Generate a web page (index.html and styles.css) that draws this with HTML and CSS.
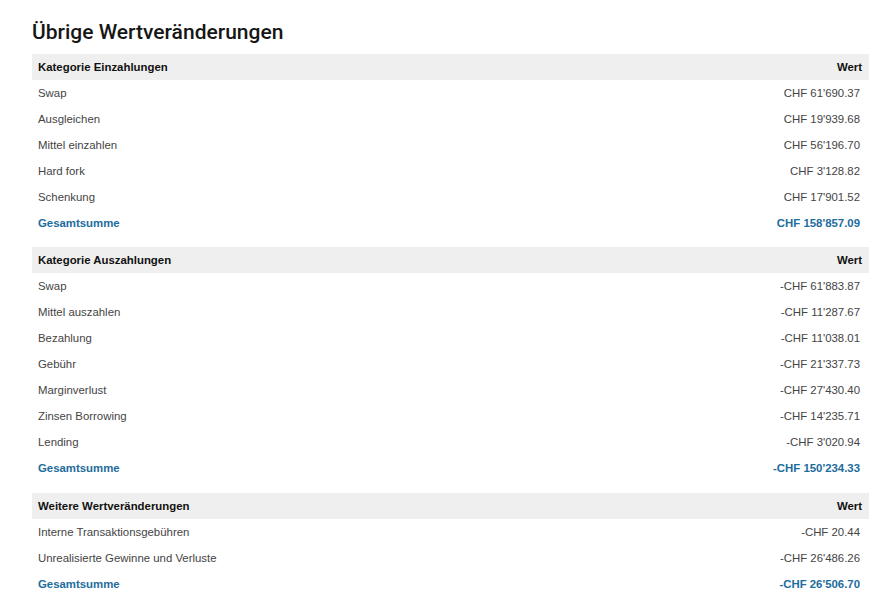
FILE: index.html
```html
<!DOCTYPE html>
<html lang="de">
<head>
    <meta charset="UTF-8">
    <meta name="viewport" content="width=device-width, initial-scale=1.0">
    <title>Übrige Wertveränderungen</title>
    <link rel="stylesheet" href="styles.css">
</head>
<body>

    <h1 class="title">Übrige Wertveränderungen</h1>

    <!-- Einzahlungen -->
    <table class="report">
        <thead>
            <tr><th>Kategorie Einzahlungen</th><th class="num">Wert</th></tr>
        </thead>
        <tbody>
            <tr><td>Swap</td><td class="num">CHF 61'690.37</td></tr>
            <tr><td>Ausgleichen</td><td class="num">CHF 19'939.68</td></tr>
            <tr><td>Mittel einzahlen</td><td class="num">CHF 56'196.70</td></tr>
            <tr><td>Hard fork</td><td class="num">CHF 3'128.82</td></tr>
            <tr><td>Schenkung</td><td class="num">CHF 17'901.52</td></tr>
            <tr class="total"><td>Gesamtsumme</td><td class="num">CHF 158'857.09</td></tr>
        </tbody>
    </table>

    <!-- Auszahlungen -->
    <table class="report">
        <thead>
            <tr><th>Kategorie Auszahlungen</th><th class="num">Wert</th></tr>
        </thead>
        <tbody>
            <tr><td>Swap</td><td class="num">-CHF 61'883.87</td></tr>
            <tr><td>Mittel auszahlen</td><td class="num">-CHF 11'287.67</td></tr>
            <tr><td>Bezahlung</td><td class="num">-CHF 11'038.01</td></tr>
            <tr><td>Gebühr</td><td class="num">-CHF 21'337.73</td></tr>
            <tr><td>Marginverlust</td><td class="num">-CHF 27'430.40</td></tr>
            <tr><td>Zinsen Borrowing</td><td class="num">-CHF 14'235.71</td></tr>
            <tr><td>Lending</td><td class="num">-CHF 3'020.94</td></tr>
            <tr class="total"><td>Gesamtsumme</td><td class="num">-CHF 150'234.33</td></tr>
        </tbody>
    </table>

    <!-- Weitere -->
    <table class="report">
        <thead>
            <tr><th>Weitere Wertveränderungen</th><th class="num">Wert</th></tr>
        </thead>
        <tbody>
            <tr><td>Interne Transaktionsgebühren</td><td class="num">-CHF 20.44</td></tr>
            <tr><td>Unrealisierte Gewinne und Verluste</td><td class="num">-CHF 26'486.26</td></tr>
            <tr class="total"><td>Gesamtsumme</td><td class="num">-CHF 26'506.70</td></tr>
        </tbody>
    </table>

</body>
</html>
```

FILE: styles.css
```css
* {
    margin: 0;
    padding: 0;
    box-sizing: border-box;
}

body {
    font-family: 'Liberation Sans', Arial, sans-serif;
    background-color: #fff;
    color: #444;
    padding: 18px 14px 0 32px;
}

/* Page title */
.title {
    font-family: Roboto, 'Liberation Sans', sans-serif;
    font-size: 21px;
    font-weight: 500;
    color: #161616;
    line-height: 28px;
    margin-bottom: 8px;
}

.report {
    width: 100%;
    border-collapse: collapse;
    margin-bottom: 11.4px;
    font-size: 11.4px;
}

.report th,
.report td {
    height: 26px;
    padding: 0 9px 0 6px;
    text-align: left;
    vertical-align: middle;
}

.report th {
    background-color: #efefef;
    color: #111;
    font-weight: bold;
    padding-right: 7px;
}

.report .num {
    text-align: right;
}

.report .total td {
    color: #1d6c9c;
    font-weight: bold;
}
```
